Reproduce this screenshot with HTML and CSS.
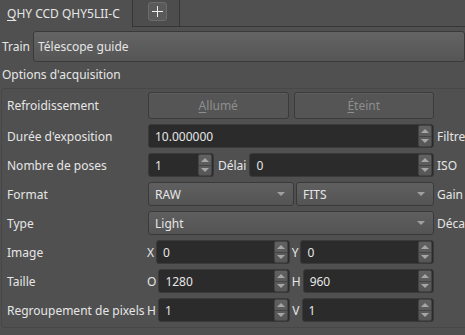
FILE: index.html
```html
<!DOCTYPE html>
<html lang="fr">
<head>
    <meta charset="UTF-8">
    <title>Acquisition - QHY CCD QHY5LII-C</title>
    <link rel="stylesheet" href="styles.css">
</head>
<body>
    <div class="tabs">
        <div class="tab tab-active"><u>Q</u>HY CCD QHY5LII-C</div>
        <div class="tab tab-add"><span class="add-btn"></span></div>
        <div class="tab-fill"></div>
    </div>

    <div class="train-row">
        <span class="train-label">Train</span>
        <div class="combo combo-train">Télescope guide</div>
    </div>

    <div class="group-title">Options d'acquisition</div>

    <div class="group">
        <div class="row row-tall">
            <span class="row-label">Refroidissement</span>
            <div class="row-field gap5">
                <button class="btn" disabled><u>A</u>llumé</button>
                <button class="btn" disabled><u>É</u>teint</button>
            </div>
        </div>

        <div class="row">
            <span class="row-label">Durée d'exposition</span>
            <div class="row-field">
                <div class="spin"><span class="spin-text">10.000000</span><span class="spin-btns"></span></div>
            </div>
            <span class="row-side">Filtre</span>
        </div>

        <div class="row">
            <span class="row-label">Nombre de poses</span>
            <div class="row-field">
                <div class="spin spin-small"><span class="spin-text">1</span><span class="spin-btns"></span></div>
                <span class="sub-label sub-delai">Délai</span>
                <div class="spin"><span class="spin-text">0</span><span class="spin-btns"></span></div>
            </div>
            <span class="row-side">ISO</span>
        </div>

        <div class="row">
            <span class="row-label">Format</span>
            <div class="row-field gap2">
                <div class="combo combo-raw">RAW</div>
                <div class="combo">FITS</div>
            </div>
            <span class="row-side">Gain</span>
        </div>

        <div class="row">
            <span class="row-label">Type</span>
            <div class="row-field">
                <div class="combo">Light</div>
            </div>
            <span class="row-side">Déca</span>
        </div>

        <div class="row">
            <span class="row-label">Image</span>
            <div class="row-field split">
                <span class="sub-label">X</span>
                <div class="spin"><span class="spin-text">0</span><span class="spin-btns"></span></div>
                <span class="sub-label">Y</span>
                <div class="spin"><span class="spin-text">0</span><span class="spin-btns"></span></div>
            </div>
        </div>

        <div class="row">
            <span class="row-label">Taille</span>
            <div class="row-field split">
                <span class="sub-label">O</span>
                <div class="spin"><span class="spin-text">1280</span><span class="spin-btns"></span></div>
                <span class="sub-label">H</span>
                <div class="spin"><span class="spin-text">960</span><span class="spin-btns"></span></div>
            </div>
        </div>

        <div class="row">
            <span class="row-label">Regroupement de pixels</span>
            <div class="row-field split">
                <span class="sub-label">H</span>
                <div class="spin"><span class="spin-text">1</span><span class="spin-btns"></span></div>
                <span class="sub-label">V</span>
                <div class="spin"><span class="spin-text">1</span><span class="spin-btns"></span></div>
            </div>
        </div>
    </div>
</body>
</html>
```

FILE: styles.css
```css
html, body {
    margin: 0;
    padding: 0;
}

body {
    font-family: 'Noto Sans', 'Open Sans', sans-serif;
    font-size: 12px;
    background-color: #505050;
    color: #e6e6e6;
    width: 465px;
    height: 335px;
    overflow: hidden;
}

u {
    text-decoration-thickness: 1px;
    text-underline-offset: 2px;
}

/* Onglets */
.tabs {
    display: flex;
    height: 26px;
}

.tab {
    display: flex;
    align-items: center;
    box-sizing: border-box;
    height: 27px;
}

.tab-active {
    width: 132px;
    padding-left: 7px;
    white-space: nowrap;
}

.tab-add {
    width: 48px;
    justify-content: center;
    background: #4d4d4d;
    border: 1px solid #363636;
    border-top: none;
    padding-bottom: 3px;
    padding-left: 2px;
}

/* bouton + dessiné en CSS */
.add-btn {
    width: 19px;
    height: 19px;
    box-sizing: border-box;
    border: 1px solid #6c6c6c;
    border-radius: 3px;
    background:
        linear-gradient(#f0f0f0, #f0f0f0) center / 11px 1px no-repeat,
        linear-gradient(#f0f0f0, #f0f0f0) center / 1px 11px no-repeat,
        #5a5a5a;
}

.tab-fill {
    flex: 1;
    height: 27px;
    box-sizing: border-box;
    border-bottom: 1px solid #363636;
}

/* Train */
.train-row {
    display: flex;
    align-items: center;
    margin-top: 5px;
    height: 31px;
    white-space: nowrap;
}

.train-label {
    width: 31px;
    padding-left: 2px;
}

.combo-train {
    flex: none;
    width: 460px;
    height: 31px !important;
    padding-left: 4px !important;
    background: linear-gradient(#646464, #555555) !important;
}

.group-title {
    height: 26px;
    line-height: 26px;
    padding-left: 2px;
    white-space: nowrap;
}

/* Groupe */
.group {
    margin-left: 1px;
    width: 560px;
    border: 1px solid #474747;
    border-radius: 3px;
    padding: 3px 0 5px 5px;
    display: flex;
    flex-direction: column;
    gap: 5px;
}

.row {
    display: flex;
    align-items: center;
    height: 24px;
    white-space: nowrap;
}

.row-tall {
    height: 27px;
}

.row-label {
    width: 141px;
    flex: none;
}

.row-field {
    width: 286px;
    flex: none;
    display: flex;
    align-items: center;
    height: 100%;
}

.row-field.split {
    margin-left: -1px;
    width: 287px;
    gap: 2px;
}

.gap5 { gap: 5px; }
.gap2 { gap: 2px; }

.row-side {
    margin-left: 3px;
}

.sub-label {
    flex: none;
}

.sub-delai {
    margin: 0 3px 0 4px;
}

/* Boutons */
.btn {
    flex: 1;
    height: 27px;
    font-family: inherit;
    font-size: 12px;
    color: #8e8e8e;
    background: #555555;
    border: 1px solid #3b3b3b;
    border-radius: 3px;
    box-shadow: inset 0 1px 0 #5e5e5e;
    padding: 0;
}

/* Champs numériques */
.spin {
    flex: 1;
    height: 24px;
    box-sizing: border-box;
    display: flex;
    align-items: center;
    background: #2b2b2b;
    border: 1px solid #3a3a3a;
    border-radius: 3px;
    padding: 0 1px 0 6px;
}

.spin-small {
    flex: none;
    width: 66px;
}

.spin-text {
    flex: 1;
    color: #e6e6e6;
}

.spin-btns {
    width: 12px;
    height: 20px;
    border: 1px solid #444;
    border-radius: 2px;
    background:
        linear-gradient(#444, #444) center / 100% 1px no-repeat,
        linear-gradient(#616161, #565656);
    position: relative;
}

.spin-btns::before,
.spin-btns::after {
    content: "";
    position: absolute;
    left: 2px;
    border-left: 4px solid transparent;
    border-right: 4px solid transparent;
}

.spin-btns::before {
    top: 3px;
    border-bottom: 4px solid #a6a6a6;
}

.spin-btns::after {
    bottom: 3px;
    border-top: 4px solid #a6a6a6;
}

/* Listes déroulantes */
.combo {
    flex: 1;
    height: 24px;
    box-sizing: border-box;
    display: flex;
    align-items: center;
    padding: 0 6px 0 6px;
    background: linear-gradient(#5f5f5f, #545454);
    border: 1px solid #3a3a3a;
    border-radius: 3px;
    position: relative;
}

.row .combo::after {
    content: "";
    position: absolute;
    right: 8px;
    top: 9px;
    border-left: 4px solid transparent;
    border-right: 4px solid transparent;
    border-top: 4px solid #a0a0a0;
}

.combo-raw {
    flex: none;
    width: 146px;
}
```
